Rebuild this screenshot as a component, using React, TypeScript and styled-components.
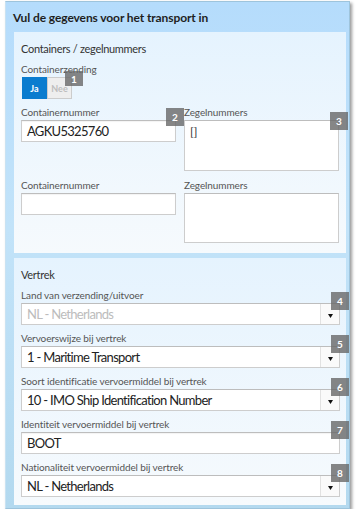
import styled, { createGlobalStyle } from 'styled-components';

const GlobalStyle = createGlobalStyle`
	body {
		margin: 0;
		background: #ffffff;
		font-family: Lato, 'Open Sans', sans-serif;
	}
	* {
		box-sizing: border-box;
	}
`;

type BadgeProps = { $top: number; $right: number; $h: number };

const Badge = ({ n, top = -11, right = -9, h = 18 }: { n: number; top?: number; right?: number; h?: number }) => (
	<BadgeBox $top={top} $right={right} $h={h}>{n}</BadgeBox>
);

const SelectField = ({ label, value, badge, disabled }: { label: string; value: string; badge: number; disabled?: boolean }) => (
	<Field>
		<Label>{label}</Label>
		<Control>
			<SelectBox>
				<SelectValue $disabled={disabled}>{value}</SelectValue>
				<Caret>
					<svg width="5" height="4" viewBox="0 0 5 4">
						<path d="M0 0 L5 0 L2.5 4 Z" fill="#111" />
					</svg>
				</Caret>
			</SelectBox>
			<Badge n={badge} />
		</Control>
	</Field>
);

export default function App() {
	return (
		<>
			<GlobalStyle />
			<Card>
				<Header>Vul de gegevens voor het transport in</Header>
				<Panel>
					<PanelTitle>Containers / zegelnummers</PanelTitle>
					<Field>
						<Label>Containerzending</Label>
						<Control $inline>
							<Toggle>
								<ToggleButton $active>Ja</ToggleButton>
								<ToggleButton>Nee</ToggleButton>
							</Toggle>
							<Badge n={1} top={-6} right={-11} h={15} />
						</Control>
					</Field>
					<Grid>
						<Field>
							<Label>Containernummer</Label>
							<Control>
								<Input>AGKU5325760</Input>
								<Badge n={2} top={-12} right={-8} />
							</Control>
						</Field>
						<Field>
							<Label>Zegelnummers</Label>
							<Control>
								<TextArea>[]</TextArea>
								<Badge n={3} top={-8} right={-9} />
							</Control>
						</Field>
						<Field>
							<Label>Containernummer</Label>
							<Control>
								<Input />
							</Control>
						</Field>
						<Field>
							<Label>Zegelnummers</Label>
							<Control>
								<TextArea $short />
							</Control>
						</Field>
					</Grid>
				</Panel>
				<Panel $second>
					<PanelTitle>Vertrek</PanelTitle>
					<Stack>
						<SelectField label="Land van verzending/uitvoer" value="NL - Netherlands" badge={4} disabled />
						<SelectField label="Vervoerswijze bij vertrek" value="1 - Maritime Transport" badge={5} />
						<SelectField label="Soort identificatie vervoermiddel bij vertrek" value="10 - IMO Ship Identification Number" badge={6} />
						<Field>
							<Label>Identiteit vervoermiddel bij vertrek</Label>
							<Control>
								<Input>BOOT</Input>
								<Badge n={7} />
							</Control>
						</Field>
						<SelectField label="Nationaliteit vervoermiddel bij vertrek" value="NL - Netherlands" badge={8} />
					</Stack>
				</Panel>
			</Card>
		</>
	);
}

const Card = styled.div`
	margin: 1px 0 0 5px;
	width: 345px;
	padding: 0 3px 3px 8px;
	border: 1px solid #9ec4dc;
	border-left-color: #c9e2f2;
	background: linear-gradient(#b5dcfc, #c2e3f9 45%, #b3d9ef);
	box-shadow: 2px 2px 3px rgba(0, 0, 0, 0.4);
`;

const Header = styled.div`
	height: 30px;
	margin-left: -1px;
	display: flex;
	align-items: center;
	font-size: 12px;
	font-weight: 700;
	letter-spacing: -0.1px;
	color: #1f1f1f;
`;

const Panel = styled.div<{ $second?: boolean }>`
	margin-top: ${(p) => (p.$second ? '5px' : '0')};
	padding: 10px 6px ${(p) => (p.$second ? '8px' : '10px')} 7px;
	background: linear-gradient(#e5f3fe, #f6fafd);
`;

const PanelTitle = styled.div`
	font-size: 11px;
	line-height: 14px;
	letter-spacing: -0.3px;
	color: #333;
	margin-bottom: 7px;
`;

const Field = styled.div`
	display: flex;
	flex-direction: column;
`;

const Label = styled.div`
	font-size: 10px;
	line-height: 12px;
	letter-spacing: -0.1px;
	color: #555;
	margin-bottom: 2px;
	white-space: nowrap;
`;

const Control = styled.div<{ $inline?: boolean }>`
	position: relative;
	align-self: ${(p) => (p.$inline ? 'flex-start' : 'stretch')};
`;

const Toggle = styled.div`
	display: flex;
	margin-left: 1px;
	margin-bottom: 7px;
`;

const ToggleButton = styled.div<{ $active?: boolean }>`
	width: 25px;
	height: 22px;
	display: flex;
	align-items: center;
	justify-content: center;
	font-size: 9px;
	font-weight: 700;
	color: ${(p) => (p.$active ? '#ffffff' : '#bdbdbd')};
	background: ${(p) => (p.$active ? '#0a7ccf' : '#eeeeee')};
	border: 1px solid ${(p) => (p.$active ? '#0a7ccf' : '#cccccc')};
`;

const Grid = styled.div`
	display: grid;
	grid-template-columns: 155px 155px;
	column-gap: 8px;
	row-gap: 8px;
`;

const Input = styled.div`
	height: 22px;
	padding: 0 5px;
	display: flex;
	align-items: center;
	font-size: 13px;
	letter-spacing: -0.7px;
	color: #222;
	background: #fff;
	border: 1px solid #cdcdcd;
	border-top-color: #bdbdbd;
	box-shadow: inset 0 1px 1px rgba(0, 0, 0, 0.05);
`;

const TextArea = styled.div<{ $short?: boolean }>`
	height: ${(p) => (p.$short ? '50px' : '51px')};
	padding: 3px 5px;
	font-size: 12px;
	line-height: 15px;
	color: #333;
	background: #fff;
	border: 1px solid #cdcdcd;
	border-top-color: #bdbdbd;
`;

const Stack = styled.div`
	margin-top: 1px;
	display: flex;
	flex-direction: column;
	gap: 7px;
`;

const SelectBox = styled.div`
	height: 22px;
	display: flex;
	background: #fff;
	border: 1px solid #cdcdcd;
	border-top-color: #bdbdbd;
`;

const SelectValue = styled.div<{ $disabled?: boolean }>`
	flex: 1;
	padding: 0 5px;
	display: flex;
	align-items: center;
	font-size: 13px;
	letter-spacing: -0.7px;
	color: ${(p) => (p.$disabled ? '#bcbcbc' : '#222')};
	white-space: nowrap;
	overflow: hidden;
`;

const Caret = styled.div`
	width: 19px;
	display: flex;
	align-items: center;
	justify-content: center;
	padding-top: 3px;
	border-left: 1px solid #e2e2e2;
	background: #fafafa;
`;

const BadgeBox = styled.span<BadgeProps>`
	position: absolute;
	top: ${(p) => p.$top}px;
	right: ${(p) => p.$right}px;
	width: 18px;
	height: ${(p) => p.$h}px;
	display: flex;
	align-items: center;
	justify-content: center;
	font-size: 10px;
	font-weight: 700;
	color: #fff;
	background: rgba(104, 104, 104, 0.8);
`;
